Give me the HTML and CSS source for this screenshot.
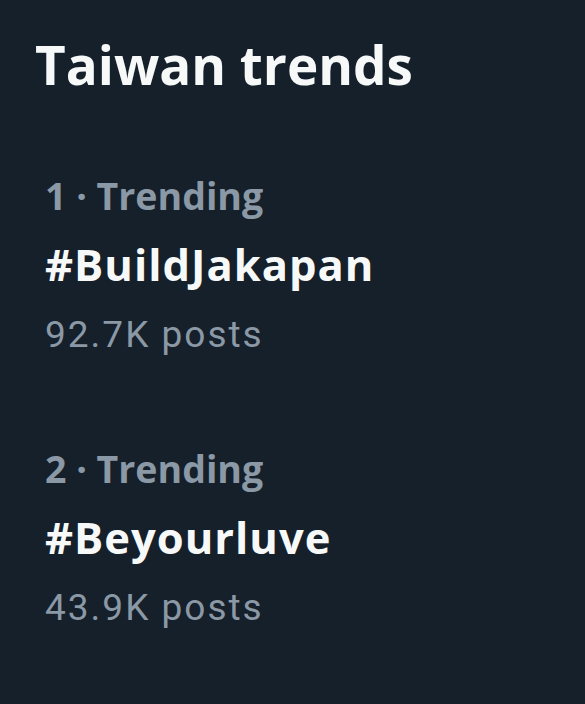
FILE: index.html
```html
<!DOCTYPE html>
<html lang="en">
<head>
  <meta charset="UTF-8" />
  <title>Taiwan trends</title>
  <link rel="stylesheet" href="styles.css">
</head>
<body>
  <section class="trends">
    <h2 class="trends-title">Taiwan trends</h2>
    <div class="trend">
      <div class="trend-meta">1 · Trending</div>
      <div class="trend-name">#BuildJakapan</div>
      <div class="trend-count">92.7K posts</div>
    </div>
    <div class="trend">
      <div class="trend-meta">2 · Trending</div>
      <div class="trend-name">#Beyourluve</div>
      <div class="trend-count">43.9K posts</div>
    </div>
  </section>
</body>
</html>
```

FILE: styles.css
```css
body {
  background-color: #15202b;
  margin: 0;
  font-family: 'Open Sans', sans-serif;
}
.trends {
  padding: 29px 0 0 0;
}
.trends-title {
  margin: 0 0 0 35px;
  font-size: 53px;
  font-weight: 700;
  line-height: 72px;
  color: #f7f9f9;
}
.trend {
  padding: 0 0 0 45px;
  margin-top: 69px;
}
.trend + .trend {
  margin-top: 84px;
}
.trend-meta {
  font-size: 37.5px;
  font-weight: 700;
  line-height: 52px;
  color: #8b98a5;
}
.trend-name {
  margin-top: 13px;
  font-size: 43.5px;
  font-weight: 700;
  line-height: 60px;
  letter-spacing: 1px;
  color: #f7f9f9;
}
.trend-count {
  margin-top: 16px;
  font-family: Roboto, sans-serif;
  font-size: 37px;
  line-height: 48px;
  letter-spacing: 2px;
  color: #8b98a5;
}
```
